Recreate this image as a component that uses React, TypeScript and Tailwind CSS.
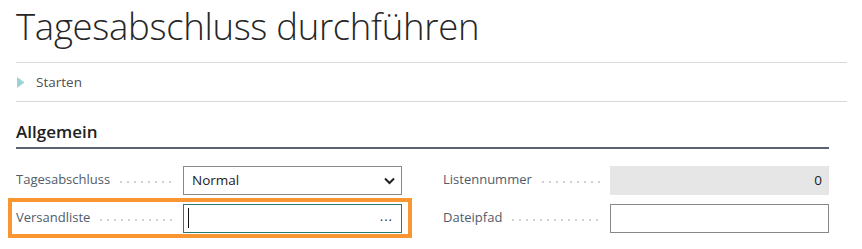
import { useState } from "react";

// leader dots between label and field
function Leader() {
  return (
    <span className="flex-1 h-[2px] mt-[3px] bg-[linear-gradient(to_right,#d2d2d2_2px,transparent_2px)] bg-[length:7px_2px] bg-repeat-x" />
  );
}

function Field({ label, children }: { label: string; children: React.ReactNode }) {
  return (
    <div className="flex items-center h-[29px]">
      <div className="w-[167px] flex items-center pr-[8px]">
        <span className="text-[13px] text-[#505c6a] mr-[10px] whitespace-nowrap">{label}</span>
        <Leader />
      </div>
      <div className="flex-1 h-full">{children}</div>
    </div>
  );
}

export default function App() {
  const [mode, setMode] = useState("Normal");

  return (
    <main className="min-h-screen bg-white font-['Open_Sans','Noto_Sans',sans-serif] text-[#212121] pl-[16px] pr-[15px]">
      {/* PAGE TITLE */}
      <h1 className="h-[63px] pt-[1px] text-[36.5px] leading-[50px] font-light tracking-[-0.3px] text-[#262626] border-b border-[#d9d9d9]">
        Tagesabschluss durchführen
      </h1>

      {/* ACTION BAR */}
      <div className="h-[39px] flex items-center border-b border-[#d9d9d9]">
        <svg width="8" height="11" viewBox="0 0 8 11" className="ml-[1px]">
          <path d="M0 0 L7.5 5.5 L0 11 Z" fill="#9dd3d6" />
        </svg>
        <span className="ml-[11px] text-[13.5px] text-[#505050]">Starten</span>
      </div>

      {/* SECTION */}
      <section className="pr-[18px]">
        <h2 className="mt-[17px] pb-[2px] text-[17px] font-semibold text-[#212121] border-b-2 border-[#5c6270]">
          Allgemein
        </h2>

        <div className="grid grid-cols-2 gap-x-[41px] gap-y-[9px] mt-[17px]">
          <Field label="Tagesabschluss">
            <div className="relative h-full">
              <select
                value={mode}
                onChange={(e) => setMode(e.target.value)}
                className="w-full h-full appearance-none border border-[#8a8886] pl-[8px] text-[13.5px] text-[#212121] bg-white outline-none"
              >
                <option>Normal</option>
                <option>Erweitert</option>
              </select>
              <svg width="11" height="8" viewBox="0 0 11 8" className="absolute right-[7px] top-[11px] pointer-events-none">
                <path d="M1 1.5 L5.5 6 L10 1.5" stroke="#212121" strokeWidth="2" fill="none" />
              </svg>
            </div>
          </Field>

          <Field label="Listennummer">
            <div className="h-full bg-[#e6e6e6] flex items-center justify-end pr-[7px] text-[13.5px] text-[#212121]">0</div>
          </Field>

          <div className="relative">
            <span className="absolute left-[-8px] right-[-10px] top-[-6px] bottom-[-5px] border-4 border-[#fa9632] pointer-events-none" />
            <Field label="Versandliste">
              <div className="h-full border border-[#2b7a71] flex items-center pl-[4px] pr-[8px]">
                <span className="w-[1px] h-[20px] bg-[#111]" />
                <span className="ml-auto text-[13px] leading-none text-[#333] tracking-[1px] -mt-[4px]">...</span>
              </div>
            </Field>
          </div>

          <Field label="Dateipfad">
            <div className="h-full border border-[#8a8886] bg-white" />
          </Field>
        </div>
      </section>
    </main>
  );
}
